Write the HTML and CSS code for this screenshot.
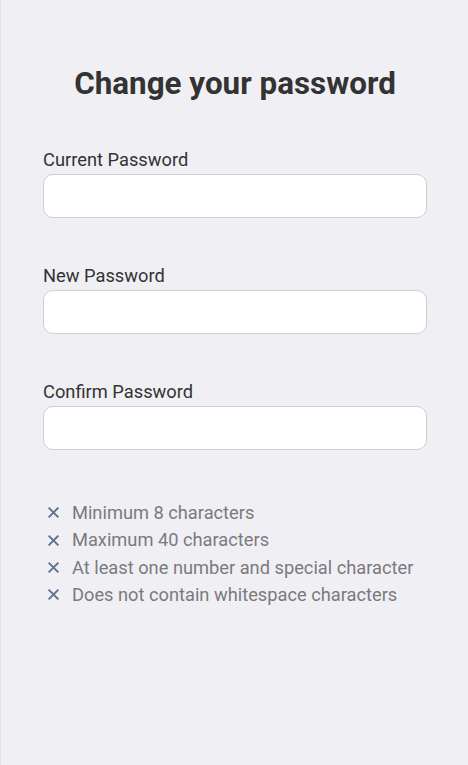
FILE: index.html
```html
<!DOCTYPE html>
<html>
<head>
<meta charset="utf-8">
<link rel="stylesheet" href="styles.css">
</head>
<body>
<main class="page">
  <h1 class="title">Change your password</h1>
  <form class="form">
    <div class="field">
      <label class="label" for="cur">Current Password</label>
      <input class="input" id="cur" type="password">
    </div>
    <div class="field">
      <label class="label" for="new">New Password</label>
      <input class="input" id="new" type="password">
    </div>
    <div class="field">
      <label class="label" for="conf">Confirm Password</label>
      <input class="input" id="conf" type="password">
    </div>
  </form>
  <ul class="rules">
    <li class="rule"><svg class="x" viewBox="0 0 12 12"><path d="M1.5 1.5L10.5 10.5M10.5 1.5L1.5 10.5"/></svg>Minimum 8 characters</li>
    <li class="rule"><svg class="x" viewBox="0 0 12 12"><path d="M1.5 1.5L10.5 10.5M10.5 1.5L1.5 10.5"/></svg>Maximum 40 characters</li>
    <li class="rule"><svg class="x" viewBox="0 0 12 12"><path d="M1.5 1.5L10.5 10.5M10.5 1.5L1.5 10.5"/></svg>At least one number and special character</li>
    <li class="rule"><svg class="x" viewBox="0 0 12 12"><path d="M1.5 1.5L10.5 10.5M10.5 1.5L1.5 10.5"/></svg>Does not contain whitespace characters</li>
  </ul>
</main>
</body>
</html>
```
FILE: styles.css
```css
html, body {
  margin: 0;
  padding: 0;
  height: 100%;
}
body {
  background: #f0f0f4;
  font-family: Roboto, "Liberation Sans", sans-serif;
  border-left: 1px solid #e2e2e6;
  border-top: 1px solid #f5eded;
  box-sizing: border-box;
}
.page {
  padding: 65px 41px 0 42px;
}
.title {
  margin: 0;
  text-align: center;
  font-size: 31.4px;
  font-weight: 700;
  color: #333333;
  line-height: 36px;
}
.form {
  margin-top: 47px;
  display: flex;
  flex-direction: column;
  gap: 47px;
}
.field {
  display: flex;
  flex-direction: column;
  gap: 3px;
}
.label {
  font-size: 18.3px;
  line-height: 22px;
  color: #333333;
}
.input {
  box-sizing: border-box;
  height: 44px;
  width: 100%;
  border: 1px solid #cfcfd3;
  border-radius: 10px;
  background: #ffffff;
  margin: 0;
  outline: none;
}
.rules {
  list-style: none;
  margin: 49px 0 0 0;
  padding: 0 0 0 4px;
  display: flex;
  flex-direction: column;
}
.rule {
  display: flex;
  align-items: center;
  gap: 12px;
  font-size: 18.25px;
  line-height: 27.4px;
  color: #7a7a7e;
}
.x {
  width: 13px;
  height: 13px;
  flex: none;
  stroke: #5d7390;
  stroke-width: 1.8;
  fill: none;
}
```
